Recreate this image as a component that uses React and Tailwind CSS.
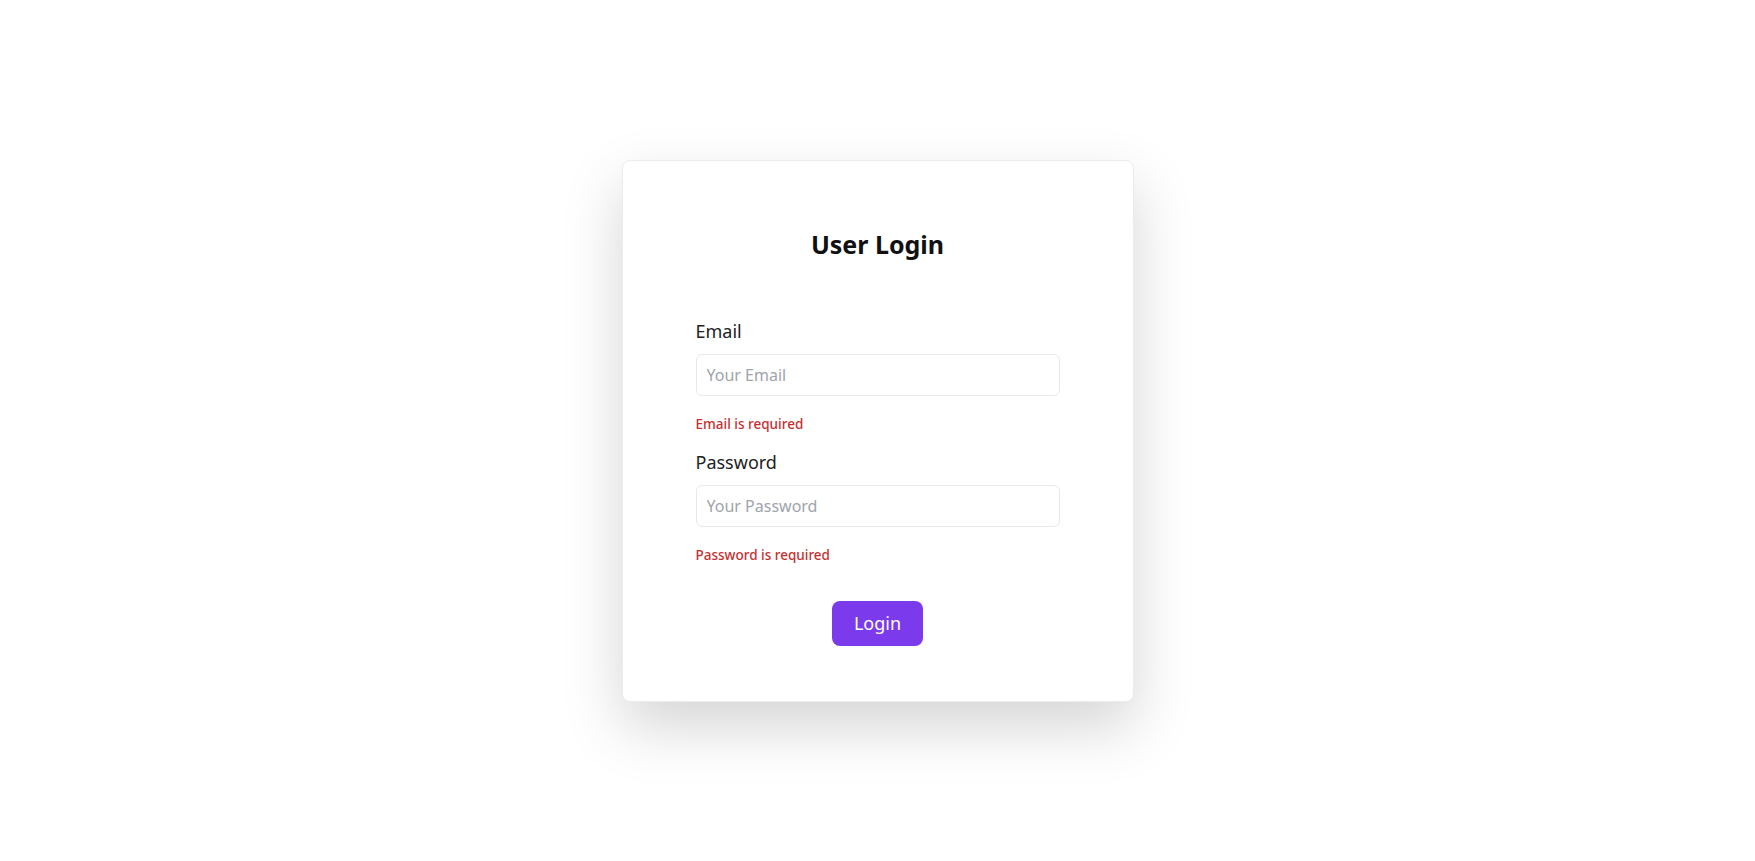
export default function App() {
  return (
    <div className="flex min-h-screen items-center justify-center bg-white font-['Noto_Sans',sans-serif]">
      <div className="w-[512px] rounded-lg border border-[#ececec] bg-white px-[73px] pt-[67px] pb-[55px] shadow-[0_25px_60px_rgba(0,0,0,0.17)]">
        <h1 className="text-center text-[25px] leading-8 font-bold text-[#111111]">User Login</h1>

        <form className="mt-[57px]" onSubmit={(e) => e.preventDefault()}>
          {/* Email */}
          <label className="block text-lg leading-7 text-[#222222]">Email</label>
          <input
            type="email"
            placeholder="Your Email"
            className="mt-[9px] block h-[42px] w-full rounded-md border border-[#e8e8e8] px-2.5 text-base text-gray-800 outline-none placeholder:text-[#a0a4ab]"
          />
          <p className="mt-[18px] text-[13.5px] leading-5 font-medium text-[#c53030]">Email is required</p>

          {/* Password */}
          <label className="mt-[14px] block text-lg leading-7 text-[#222222]">Password</label>
          <input
            type="password"
            placeholder="Your Password"
            className="mt-[9px] block h-[42px] w-full rounded-md border border-[#e8e8e8] px-2.5 text-base text-gray-800 outline-none placeholder:text-[#a0a4ab]"
          />
          <p className="mt-[18px] text-[13.5px] leading-5 font-medium text-[#c53030]">Password is required</p>

          <div className="mt-9 flex justify-center">
            <button
              type="submit"
              className="h-[45px] rounded-lg bg-[#7c3aed] px-[22px] text-lg text-white"
            >
              Login
            </button>
          </div>
        </form>
      </div>
    </div>
  )
}
